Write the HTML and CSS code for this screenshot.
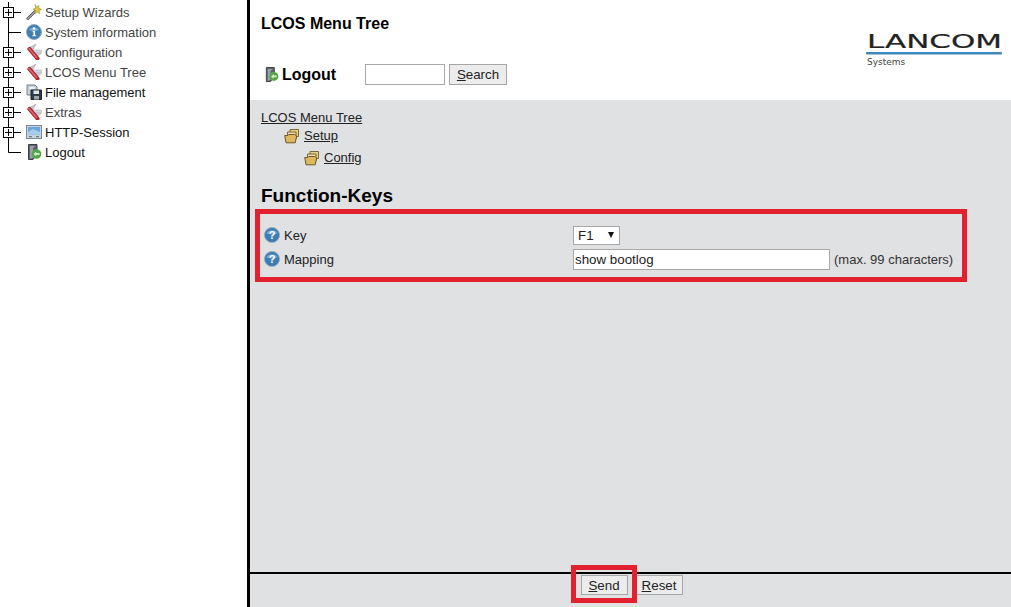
FILE: index.html
```html
<!DOCTYPE html>
<html lang="en">
<head>
  <meta charset="UTF-8">
  <title>LCOS Menu Tree</title>
  <link rel="stylesheet" href="styles.css">
</head>
<body>
  <!-- shared icons -->
  <svg class="defs">
    <symbol id="i-plus" viewBox="0 0 22 20">
      <path d="M8.500 0V20" stroke="#000" fill="none"/>
      <rect x="3.500" y="5.500" width="10" height="10" fill="#fff" stroke="#000"/>
      <path d="M5 10.500H12M8.500 7V14M13.500 10.500H21" stroke="#000" fill="none"/>
    </symbol>
    <symbol id="i-tee" viewBox="0 0 22 20">
      <path d="M8.500 0V20M8.500 10.500H21" stroke="#000" fill="none"/>
    </symbol>
    <symbol id="i-end" viewBox="0 0 22 20">
      <path d="M8.500 0V10.500H21" stroke="#000" fill="none"/>
    </symbol>
    <symbol id="i-wand" viewBox="0 0 16 16">
      <path d="M1 15.500L10 6.500" stroke="#4d4d4d" stroke-width="2.600"/>
      <path d="M1 15.500L10 6.500" stroke="#e4e4e4" stroke-width="1"/>
      <path d="M9 .5l1.600 2.400L13 1.500l-.2 2.800 2.900 1.200-2.600 1.300.5 3-2.400-1.800-2.300 1.500.5-2.900-2.600-1.600 2.900-.5z" fill="#d9c93c" stroke="#8f8420" stroke-width=".5"/>
    </symbol>
    <symbol id="i-info" viewBox="0 0 16 16">
      <circle cx="8" cy="8" r="7.500" fill="#3f7fb5" stroke="#8fa9bd"/>
      <path d="M3 6a5.500 4.500 0 0 1 10 0a8 4 0 0 1-10 0z" fill="#7fb1d8"/>
      <circle cx="8" cy="4.600" r="1.300" fill="#fff"/>
      <path d="M6.600 7h2.500v4.200h1v1.100H6.400v-1.100h1V8.100h-.8z" fill="#fff"/>
    </symbol>
    <symbol id="i-tool" viewBox="0 0 16 16">
      <path d="M10 0L2 4.500L6 7.500z" fill="#c4c7cb" stroke="#94989d" stroke-width=".5"/>
      <path d="M6 6H15.500V8.500H8z" fill="#d8dadd" stroke="#a5a8ac" stroke-width=".5"/>
      <path d="M9 9.500H15.500L11 12.500z" fill="#d0d3d6" stroke="#a5a8ac" stroke-width=".5"/>
      <path d="M3.500 5L11.500 14.500" stroke="#b02a36" stroke-width="4.200" stroke-linecap="round"/>
      <path d="M3 4.500L10.500 13.500" stroke="#df6f78" stroke-width="1.200" stroke-linecap="round"/>
    </symbol>
    <symbol id="i-disk" viewBox="0 0 16 16">
      <path d="M1 1h8l2 2v8H1z" fill="#c5d0da" stroke="#77838e"/>
      <path d="M3.500 3h5v2h-5z" fill="#eef2f5"/>
      <path d="M5 6h10.500v9.500H5z" fill="#2f3a44" stroke="#1d2329"/>
      <path d="M7.500 6.500h5.500v3.500H7.500z" fill="#dfe5ea"/>
      <path d="M8 12h5v3.500H8z" fill="#9aa7b2"/>
    </symbol>
    <symbol id="i-screen" viewBox="0 0 16 16">
      <rect x=".5" y="1.500" width="15" height="13" fill="#c8d2da" stroke="#7b8a96"/>
      <rect x="2" y="3" width="12" height="7.500" fill="#6ba6dc"/>
      <path d="M2 8L7 5l7 3v2.500H2z" fill="#a8cdec"/>
      <path d="M3 12h3v1.200H3zM10 12h3v1.200h-3z" fill="#6d7b87"/>
    </symbol>
    <symbol id="i-door" viewBox="0 0 16 16">
      <path d="M2.500 .5H11V10L7 15.500H2.500z" fill="#5c646b" stroke="#3a4046"/>
      <path d="M4 2h5.500L7 4v9.500L4 15z" fill="#9aa3aa"/>
      <circle cx="10.500" cy="10" r="4.800" fill="#55a94a"/>
      <path d="M7 10l3.500-3.300V8.500h3.500v3h-3.500v1.800z" fill="#c6ecb8" stroke="#2f7a2c" stroke-width=".5"/>
    </symbol>
    <symbol id="i-folders" viewBox="0 0 16 16">
      <path d="M6 1.500h8.500v7H6z" fill="#e6cf85" stroke="#6f5c2a" stroke-width=".9"/>
      <path d="M3.500 4h8.500v7H3.500z" fill="#efdfa8" stroke="#6f5c2a" stroke-width=".9"/>
      <path d="M.7 7.500h3l1-1h6l2 1.500-1.500 6.800H2z" fill="#dcb95c" stroke="#5f4c20" stroke-width=".9"/>
    </symbol>
    <symbol id="i-help" viewBox="0 0 16 16">
      <circle cx="8" cy="8" r="7.500" fill="#3b7cb3" stroke="#96aab9"/>
      <path d="M2.500 6.500a5.800 4.800 0 0 1 11 0a9 4 0 0 1-11 0z" fill="#74aad4"/>
      <text x="8" y="12.200" class="help-mark">?</text>
    </symbol>
  </svg>

  <div class="shell">
    <nav class="nav">
      <ul class="tree">
        <li><svg class="joint"><use href="#i-plus"/></svg><svg class="ico"><use href="#i-wand"/></svg><span>Setup Wizards</span></li>
        <li><svg class="joint"><use href="#i-tee"/></svg><svg class="ico"><use href="#i-info"/></svg><span>System information</span></li>
        <li><svg class="joint"><use href="#i-plus"/></svg><svg class="ico"><use href="#i-tool"/></svg><span>Configuration</span></li>
        <li><svg class="joint"><use href="#i-plus"/></svg><svg class="ico"><use href="#i-tool"/></svg><span>LCOS Menu Tree</span></li>
        <li class="dark"><svg class="joint"><use href="#i-plus"/></svg><svg class="ico"><use href="#i-disk"/></svg><span>File management</span></li>
        <li><svg class="joint"><use href="#i-plus"/></svg><svg class="ico"><use href="#i-tool"/></svg><span>Extras</span></li>
        <li class="dark"><svg class="joint"><use href="#i-plus"/></svg><svg class="ico"><use href="#i-screen"/></svg><span>HTTP-Session</span></li>
        <li class="dark"><svg class="joint"><use href="#i-end"/></svg><svg class="ico"><use href="#i-door"/></svg><span>Logout</span></li>
      </ul>
    </nav>

    <main class="content">
      <header class="top">
        <div class="top-left">
          <h1>LCOS Menu Tree</h1>
          <div class="top-actions">
            <a class="logout"><svg class="ico-logout"><use href="#i-door"/></svg>Logout</a>
            <input class="search-box" type="text">
            <button class="btn search-btn"><u>S</u>earch</button>
          </div>
        </div>
        <svg class="logo" viewBox="0 0 140 40" width="140" height="40">
          <text class="logo-name" x="2" y="17" textLength="135" lengthAdjust="spacingAndGlyphs">LANCOM</text>
          <rect x="1" y="21" width="136" height="2.500" rx="1" fill="#3f88bd"/>
          <text class="logo-sub" x="2" y="34">Systems</text>
        </svg>
      </header>

      <section class="panel">
        <div class="crumbs">
          <a class="crumb">LCOS Menu Tree</a>
          <div class="crumb-row lvl-1"><svg class="ico"><use href="#i-folders"/></svg><a class="crumb">Setup</a></div>
          <div class="crumb-row lvl-2"><svg class="ico"><use href="#i-folders"/></svg><a class="crumb">Config</a></div>
        </div>
        <h2>Function-Keys</h2>
        <form class="keys">
          <div class="field"><svg class="ico"><use href="#i-help"/></svg>Key</div>
          <div class="control"><span class="select-box">F1<i class="caret"></i></span></div>
          <div class="field"><svg class="ico"><use href="#i-help"/></svg>Mapping</div>
          <div class="control"><input class="map-input" type="text" value="show bootlog"><span class="hint">(max. 99 characters)</span></div>
        </form>
      </section>

      <footer class="foot">
        <span class="send-wrap"><button class="btn"><u>S</u>end</button></span>
        <button class="btn"><u>R</u>eset</button>
      </footer>
    </main>
  </div>
</body>
</html>
```

FILE: styles.css
```css
* { box-sizing: border-box; }
html, body { margin: 0; height: 100%; overflow: hidden; }
body { font-family: "Liberation Sans", Arial, sans-serif; font-size: 13px; color: #222; background: #fff; }
.defs { display: none; }
.help-mark { font: bold 11px "Liberation Sans", Arial, sans-serif; fill: #fff; text-anchor: middle; }

.shell { display: flex; height: 607px; }

/* left tree */
.nav { width: 247px; flex: none; padding-top: 2px; }
.tree { list-style: none; margin: 0; padding: 0; }
.tree li { display: flex; align-items: center; height: 20px; color: #444; white-space: nowrap; }
.tree li.dark { color: #111; }
.joint { width: 22px; height: 20px; flex: none; }
.ico { width: 16px; height: 16px; flex: none; }
.tree .ico { margin: 0 3px 0 4px; }

/* right side */
.content { flex: 1; display: flex; flex-direction: column; border-left: 3px solid #000; }
.top { height: 100px; flex: none; display: flex; justify-content: space-between; padding: 14px 6px 0 11px; }
h1 { margin: 0; font-size: 16px; line-height: 19px; color: #000; }
.top-actions { display: flex; align-items: center; margin-top: 31px; height: 21px; }
.logout { display: flex; align-items: center; width: 104px; padding-left: 3px; font-size: 16px; font-weight: bold; color: #000; }
.ico-logout { width: 15px; height: 17px; margin-right: 3px; }
.search-box { width: 80px; height: 21px; margin: 0 4px 0 0; border: 1px solid #a9a9a9; background: #fff; }
.search-btn { width: 58px; height: 21px; }
.btn { padding: 0; height: 21px; font: 13.330px "Liberation Sans", Arial, sans-serif; color: #222; background: #ececec; border: 1px solid #a6a6a6; }
.logo { margin-top: 17px; overflow: visible; }
.logo-name { font: 19px "DejaVu Sans", sans-serif; fill: #222; stroke: #222; stroke-width: .2; }
.logo-sub { font: 9px "DejaVu Sans", sans-serif; fill: #444; }

.panel { flex: 1; background: #e0e1e3; padding: 9px 5px 0; }
.crumbs { padding-left: 6px; line-height: 18px; }
.crumb { color: #222; text-decoration: underline; }
.crumb-row { display: flex; align-items: center; height: 22px; }
.crumb-row .ico { margin-right: 4px; }
.lvl-1 { margin-left: 23px; height: 18px; }
.lvl-2 { margin-left: 43px; margin-top: 2px; }
h2 { margin: 15px 0 0 6px; font-size: 19px; line-height: 24px; color: #000; }
.keys { width: 712px; height: 73px; margin-top: 1px; padding: 9px 0 0 4px; border: 5px solid #e3202d; display: grid; grid-template-columns: 309px 1fr; grid-template-rows: 24px 24px; align-items: center; }
.field { display: flex; align-items: center; }
.field .ico { margin-right: 4px; }
.control { display: flex; align-items: center; }
.select-box { display: flex; align-items: center; justify-content: space-between; width: 47px; height: 19px; padding: 0 5px 0 4px; font-size: 13.330px; background: #fff; border: 1px solid #a9a9a9; color: #222; }
.caret { width: 0; height: 0; border-left: 3.500px solid transparent; border-right: 3.500px solid transparent; border-top: 6px solid #111; }
.map-input { width: 257px; height: 21px; margin: 0; padding: 0 1px; border: 1px solid #a9a9a9; background: #fff; font: 13.330px "Liberation Sans", Arial, sans-serif; color: #222; }
.hint { margin-left: 4px; color: #333; white-space: nowrap; }

.foot { height: 35px; flex: none; display: flex; justify-content: center; align-items: flex-start; gap: 8px; padding: 1px 0 0 2px; background: #e0e1e3; border-top: 2px solid #000; }
.foot .btn { width: 47px; height: 20px; }
.send-wrap { position: relative; display: block; height: 20px; }
.send-wrap::after { content: ""; position: absolute; top: -10px; right: -9px; bottom: -8px; left: -10px; border: 5px solid #e3202d; pointer-events: none; }
```
